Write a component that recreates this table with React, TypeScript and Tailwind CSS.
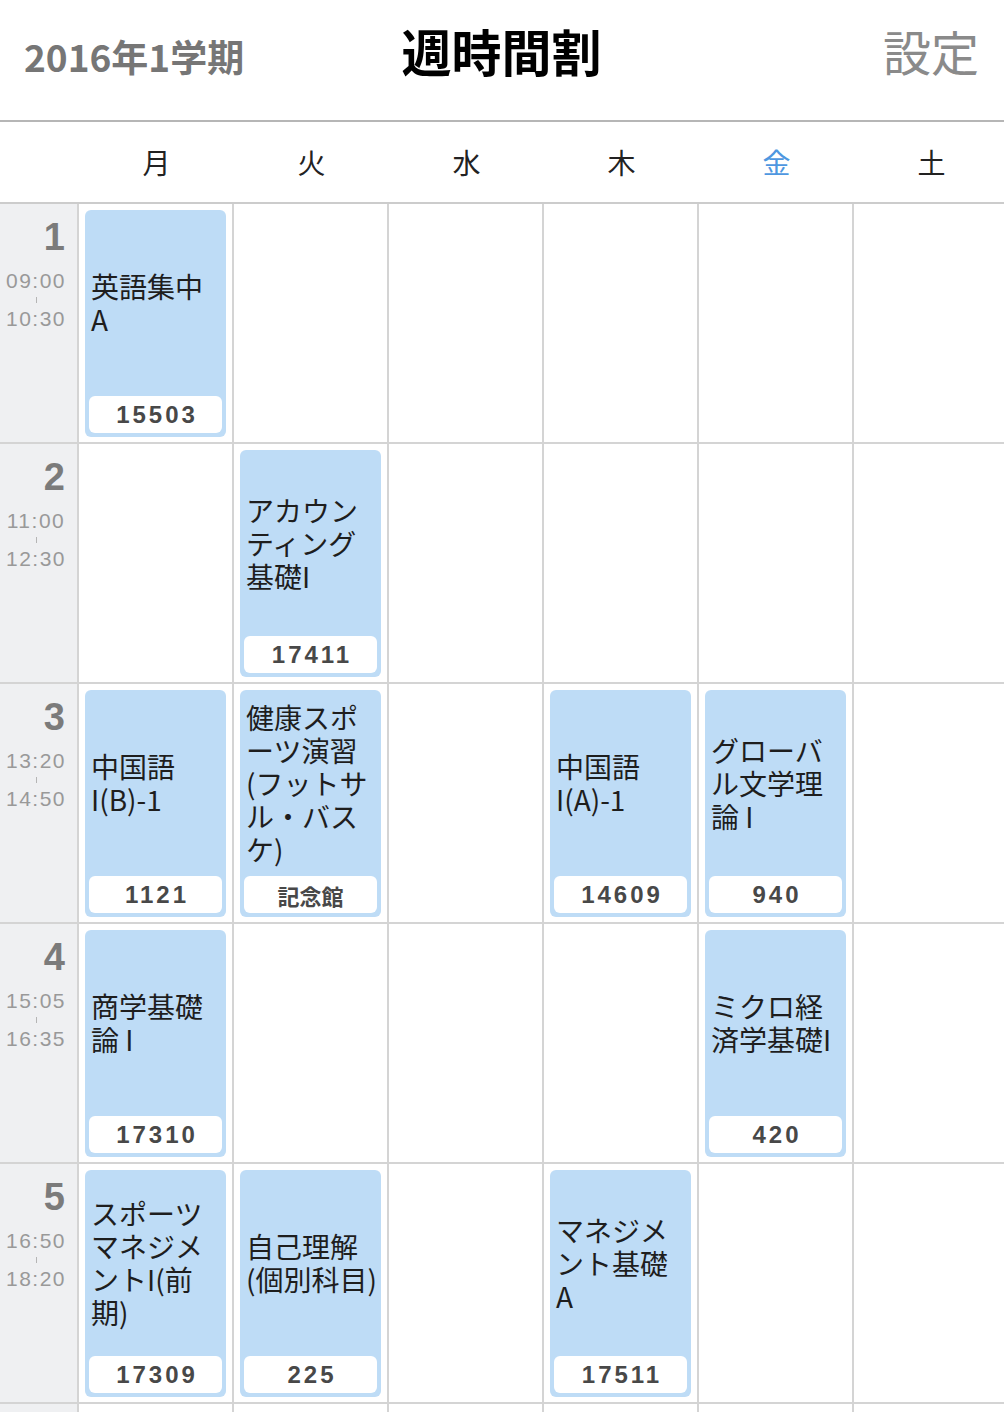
import React from "react";

type Course = { lines: string[]; room: string } | null;

const JP = { fontFamily: '"Noto Sans CJK JP", "Noto Sans", sans-serif' };
const NUM = { fontFamily: '"Liberation Sans", Arial, sans-serif' };

const periods: { n: string; start: string; end: string; cells: Course[] }[] = [
  {
    n: "1",
    start: "09:00",
    end: "10:30",
    cells: [{ lines: ["英語集中", "A"], room: "15503" }, null, null, null, null, null],
  },
  {
    n: "2",
    start: "11:00",
    end: "12:30",
    cells: [null, { lines: ["アカウン", "ティング", "基礎I"], room: "17411" }, null, null, null, null],
  },
  {
    n: "3",
    start: "13:20",
    end: "14:50",
    cells: [
      { lines: ["中国語", "I(B)-1"], room: "1121" },
      { lines: ["健康スポ", "ーツ演習", "(フットサ", "ル・バス", "ケ)"], room: "記念館" },
      null,
      { lines: ["中国語", "I(A)-1"], room: "14609" },
      { lines: ["グローバ", "ル文学理", "論 I"], room: "940" },
      null,
    ],
  },
  {
    n: "4",
    start: "15:05",
    end: "16:35",
    cells: [
      { lines: ["商学基礎", "論 I"], room: "17310" },
      null,
      null,
      null,
      { lines: ["ミクロ経", "済学基礎I"], room: "420" },
      null,
    ],
  },
  {
    n: "5",
    start: "16:50",
    end: "18:20",
    cells: [
      { lines: ["スポーツ", "マネジメ", "ントI(前", "期)"], room: "17309" },
      { lines: ["自己理解", "(個別科目)"], room: "225" },
      null,
      { lines: ["マネジメ", "ント基礎", "A"], room: "17511" },
      null,
      null,
    ],
  },
];

const days = ["月", "火", "水", "木", "金", "土"];

function CourseCard({ c }: { c: NonNullable<Course> }) {
  const isNum = /^[0-9]+$/.test(c.room);
  return (
    <div className="flex h-full flex-col rounded-[6px] bg-[#bedcf6] px-[4px] pb-[4px]">
      <div className="flex flex-1 flex-col justify-center pl-[2px] text-[28px] leading-[33px] text-[#1e1e1e]" style={JP}>
        {c.lines.map((l, i) => (
          <div key={i} className="whitespace-nowrap">
            {l}
          </div>
        ))}
      </div>
      <div className="flex h-[37px] items-center justify-center rounded-[6px] bg-white">
        {isNum ? (
          <span className="pl-[3px] text-[24px] font-bold leading-none tracking-[3px] text-[#484848]" style={NUM}>
            {c.room}
          </span>
        ) : (
          <span className="text-[22px] font-bold leading-none text-[#484848]" style={JP}>
            {c.room}
          </span>
        )}
      </div>
    </div>
  );
}

export default function App() {
  return (
    <div className="h-[1412px] w-[1004px] overflow-hidden bg-white" style={JP}>
      {/* Header */}
      <div className="flex h-[122px] items-center justify-between border-b-2 border-[#b6b6b6] pb-[20px] pl-[24px] pr-[25px]">
        <div className="w-[260px] pt-[12px] text-[37px] font-semibold leading-none text-[#767676]">2016年1学期</div>
        <div className="text-[50px] font-bold leading-none text-black">週時間割</div>
        <div className="w-[260px] text-right text-[48px] leading-none text-[#8a8a8a]">設定</div>
      </div>

      {/* Day header */}
      <div className="grid h-[82px] grid-cols-[79px_repeat(6,155px)] border-b-2 border-[#cccccc]">
        <div />
        {days.map((d) => (
          <div
            key={d}
            className={`flex items-center justify-center text-[28px] leading-none ${
              d === "金" ? "text-[#4e97e0]" : "text-[#222222]"
            }`}
          >
            {d}
          </div>
        ))}
      </div>

      {/* Timetable */}
      <div className="grid grid-cols-[77px_repeat(6,153px)] gap-[2px] bg-[#d4d4d4]">
        {periods.map((p) => (
          <React.Fragment key={p.n}>
            <div className="flex h-[238px] flex-col items-stretch bg-[#eff0f2] pt-[14px]">
              <div className="pr-[12px] text-right text-[38px] font-bold leading-none text-[#7b7b7b]" style={NUM}>
                {p.n}
              </div>
              <div className="mt-[15px] flex flex-col items-center pr-[5px] text-[#999999]" style={NUM}>
                <div className="text-[21px] leading-[20px] tracking-[1.5px]">{p.start}</div>
                <div className="flex h-[18px] items-center">
                  <div className="h-[6px] w-[1px] bg-[#b5b5b5]" />
                </div>
                <div className="text-[21px] leading-[20px] tracking-[1.5px]">{p.end}</div>
              </div>
            </div>
            {p.cells.map((c, i) => (
              <div key={i} className="h-[238px] bg-white px-[6px] pb-[5px] pt-[6px]">
                {c ? <CourseCard c={c} /> : null}
              </div>
            ))}
          </React.Fragment>
        ))}
        <div className="h-[238px] bg-[#eff0f2]" />
        {days.map((d) => (
          <div key={"x" + d} className="h-[238px] bg-white" />
        ))}
      </div>
    </div>
  );
}
